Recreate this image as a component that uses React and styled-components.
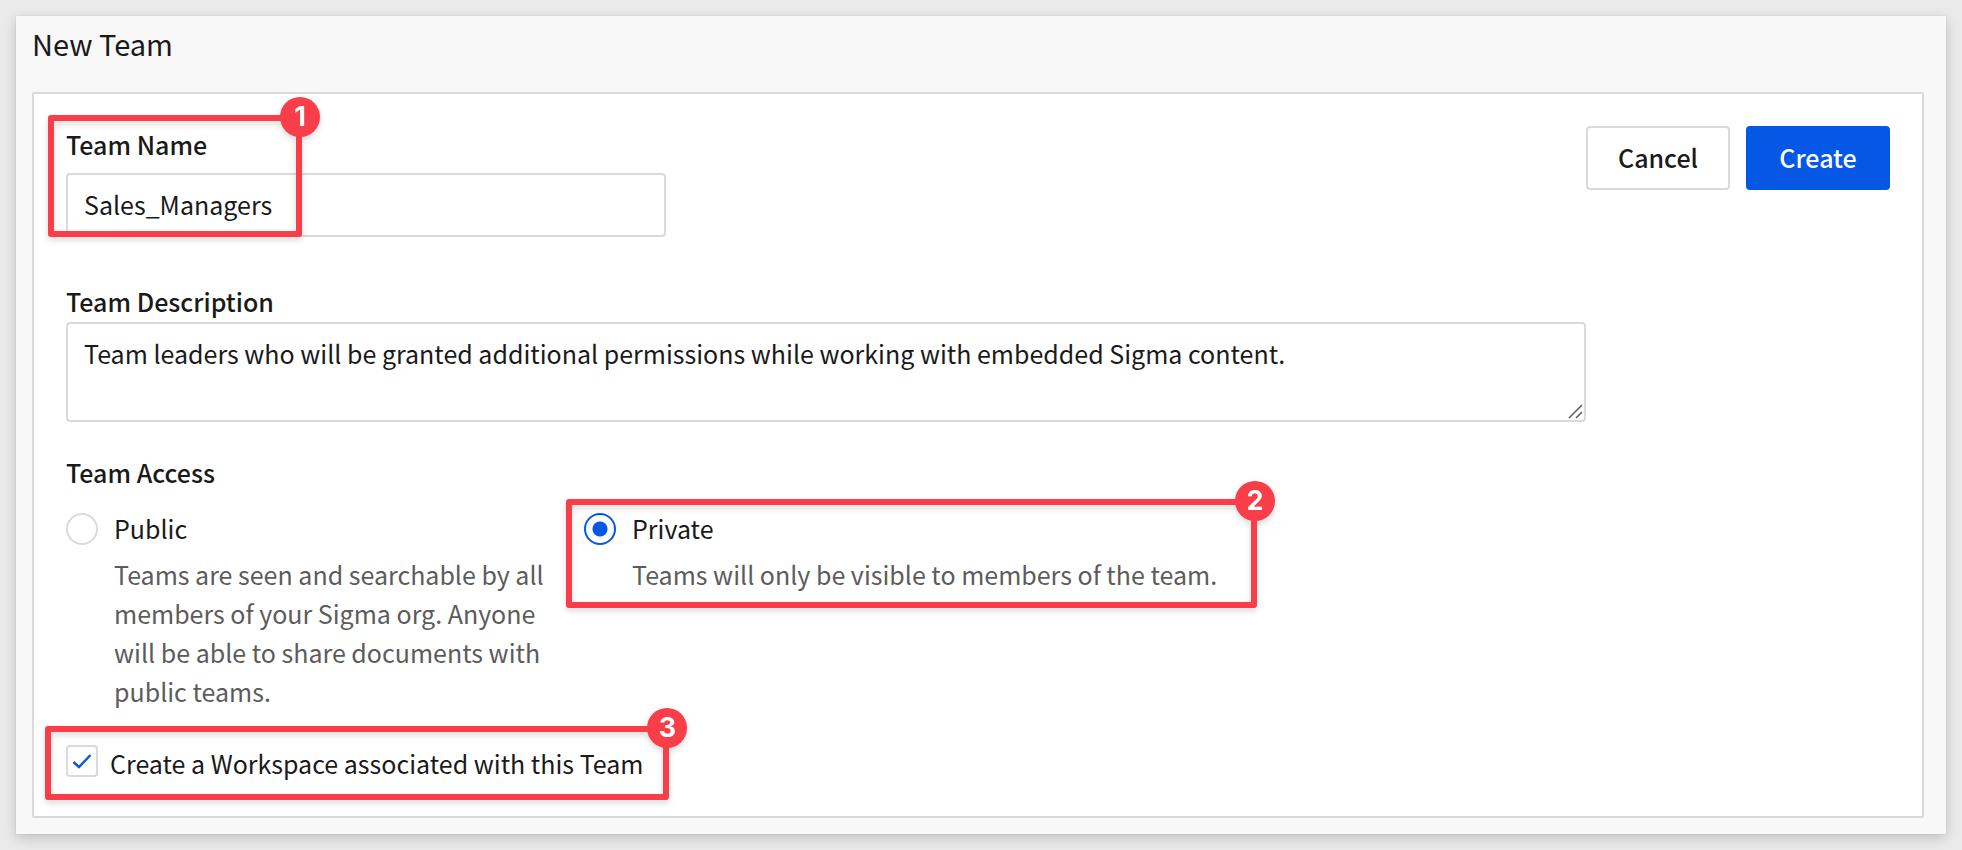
import React, { useState } from "react";
import styled, { createGlobalStyle } from "styled-components";

const colors = {
  page: "#eaeaea",
  panel: "#f8f8f8",
  border: "#dadada",
  text: "#1a1a1a",
  muted: "#5c5c5c",
  blue: "#0558e6",
  red: "#f93e49",
};

const GlobalStyle = createGlobalStyle`
  *, *::before, *::after { box-sizing: border-box; }
  body {
    margin: 0;
    background: ${colors.page};
    color: ${colors.text};
    font-family: "Noto Sans CJK SC", "Open Sans", sans-serif;
    font-size: 25px;
    line-height: 39px;
  }
  button, input, textarea { font: inherit; color: inherit; margin: 0; }
`;

const Page = styled.div`
  padding: 16px;
`;

const Panel = styled.main`
  padding: 8px 22px 16px 16px;
  background: ${colors.panel};
  box-shadow: 0 4px 12px rgba(0, 0, 0, 0.18), 0 0 2px rgba(0, 0, 0, 0.1);
`;

const Title = styled.h1`
  margin: 0 0 30px;
  font-size: 29px;
  font-weight: 400;
  line-height: 38px;
`;

const Card = styled.form`
  padding: 32px 32px 34px;
  background: #fff;
  border: 2px solid ${colors.border};
  border-radius: 2px;
`;

const TopRow = styled.div`
  display: flex;
  justify-content: space-between;
  align-items: flex-start;
  gap: 32px;
`;

const Field = styled.div`
  position: relative;
  display: flex;
  flex-direction: column;
  flex: 0 1 ${(p) => p.$width};
  max-width: ${(p) => p.$width};
  gap: ${(p) => p.$gap};
`;

const Label = styled.label`
  font-weight: 500;
  line-height: 37px;
`;

const TextInput = styled.input`
  width: 100%;
  height: 64px;
  padding: 0 16px 2px;
  background: #fff;
  border: 2px solid ${colors.border};
  border-radius: 4px;
  outline: none;
`;

const TextAreaWrap = styled.div`
  position: relative;
  display: flex;
`;

const TextArea = styled.textarea`
  width: 100%;
  height: 100px;
  padding: 10px 16px;
  background: #fff;
  border: 2px solid ${colors.border};
  border-radius: 4px;
  outline: none;
  overflow: hidden;
  resize: vertical;
  &::-webkit-resizer { display: none; }
`;

const Grip = styled.svg`
  position: absolute;
  right: 3px;
  bottom: 3px;
  width: 15px;
  height: 15px;
  pointer-events: none;
`;

const Actions = styled.div`
  display: flex;
  gap: 16px;
`;

const Button = styled.button`
  width: 144px;
  height: 64px;
  padding: 0 0 2px;
  font-weight: 500;
  color: ${(p) => (p.$primary ? "#fff" : colors.text)};
  background: ${(p) => (p.$primary ? colors.blue : "#fff")};
  border: 2px solid ${(p) => (p.$primary ? colors.blue : colors.border)};
  border-radius: 4px;
  cursor: pointer;
`;

const Section = styled.div`
  margin-top: 46px;
`;

const AccessGroup = styled.fieldset`
  margin: 32px 0 0;
  padding: 0;
  border: 0;
`;

const Legend = styled.legend`
  padding: 0;
  margin-bottom: 22px;
  font-weight: 500;
  line-height: 37px;
`;

const Options = styled.div`
  display: flex;
  align-items: flex-start;
  gap: 32px;
`;

const Option = styled.div`
  position: relative;
  display: grid;
  grid-template-columns: 32px 1fr;
  column-gap: 16px;
  row-gap: 10px;
  max-width: ${(p) => p.$width};
`;

const OptionLabel = styled.label`
  line-height: 30px;
`;

const Hint = styled.p`
  grid-column: 2;
  margin: 0;
  color: ${colors.muted};
`;

const Radio = styled.input`
  appearance: none;
  width: 32px;
  height: 32px;
  background: #fff;
  border: 2px solid ${colors.border};
  border-radius: 50%;
  &:checked {
    border-color: ${colors.blue};
    background: radial-gradient(circle, ${colors.blue} 0 7px, #fff 8px);
  }
`;

const CheckRow = styled.div`
  position: relative;
  display: flex;
  align-items: flex-start;
  gap: 12px;
  width: fit-content;
  margin-top: 34px;
`;

const CheckControl = styled.span`
  position: relative;
  display: flex;
`;

const Checkbox = styled.input`
  appearance: none;
  width: 32px;
  height: 32px;
  background: #fff;
  border: 2px solid ${colors.border};
  border-radius: 4px;
  &:not(:checked) + svg { display: none; }
`;

const CheckLabel = styled.label`
  line-height: 37px;
`;

const Tick = styled.svg`
  position: absolute;
  inset: 0;
  width: 32px;
  height: 32px;
  pointer-events: none;
`;

const Callout = styled.span`
  position: absolute;
  inset: ${(p) => p.$inset};
  width: ${(p) => p.$width};
  border: 6px solid ${colors.red};
  border-radius: 3px;
  filter: drop-shadow(0 3px 3px rgba(0, 0, 0, 0.15));
  pointer-events: none;
`;

const Badge = styled.span`
  position: absolute;
  top: -24px;
  right: -24px;
  width: 40px;
  height: 40px;
  border-radius: 50%;
  background: ${colors.red};
  color: #fff;
  font-family: Inter, "Liberation Sans", sans-serif;
  font-size: 27px;
  font-weight: 700;
  line-height: 40px;
  text-align: center;
`;

function Step({ number, inset, width }) {
  return (
    <Callout $inset={inset} $width={width}>
      <Badge>{number}</Badge>
    </Callout>
  );
}

export default function App() {
  const [access, setAccess] = useState("private");
  return (
    <>
      <GlobalStyle />
      <Page>
        <Panel>
          <Title>New Team</Title>
          <Card onSubmit={(e) => e.preventDefault()}>
            <TopRow>
              <Field $width="600px" $gap="10px">
                <Label htmlFor="team-name">Team Name</Label>
                <TextInput id="team-name" type="text" defaultValue="Sales_Managers" />
                <Step number={1} inset="-11px auto 0 -18px" width="254px" />
              </Field>
              <Actions>
                <Button type="button">Cancel</Button>
                <Button type="submit" $primary>Create</Button>
              </Actions>
            </TopRow>

            <Section>
              <Field $width="1520px" $gap="2px">
                <Label htmlFor="team-description">Team Description</Label>
                <TextAreaWrap>
                  <TextArea
                    id="team-description"
                    defaultValue="Team leaders who will be granted additional permissions while working with embedded Sigma content."
                  />
                  <Grip viewBox="0 0 15 15" fill="none" stroke="#5a5a5a" strokeWidth="1.5" aria-hidden="true">
                    <path d="M1 14 14 1M8 14l6-6" />
                  </Grip>
                </TextAreaWrap>
              </Field>
            </Section>

            <AccessGroup>
              <Legend>Team Access</Legend>
              <Options>
                <Option $width="486px">
                  <Radio
                    id="access-public"
                    type="radio"
                    name="access"
                    checked={access === "public"}
                    onChange={() => setAccess("public")}
                  />
                  <OptionLabel htmlFor="access-public">Public</OptionLabel>
                  <Hint>
                    Teams are seen and searchable by all members of your Sigma org. Anyone will be able
                    to share documents with public teams.
                  </Hint>
                </Option>
                <Option>
                  <Radio
                    id="access-private"
                    type="radio"
                    name="access"
                    checked={access === "private"}
                    onChange={() => setAccess("private")}
                  />
                  <OptionLabel htmlFor="access-private">Private</OptionLabel>
                  <Hint>Teams will only be visible to members of the team.</Hint>
                  <Step number={2} inset="-14px -40px -14px -18px" />
                </Option>
              </Options>
            </AccessGroup>

            <CheckRow>
              <CheckControl>
                <Checkbox id="create-workspace" type="checkbox" defaultChecked />
                <Tick viewBox="0 0 32 32" fill="none" stroke={colors.blue} strokeWidth="2.4" aria-hidden="true">
                  <path d="M7.5 17 13 22 24.5 10" />
                </Tick>
              </CheckControl>
              <CheckLabel htmlFor="create-workspace">Create a Workspace associated with this Team</CheckLabel>
              <Step number={3} inset="-19px -26px -18px -21px" />
            </CheckRow>
          </Card>
        </Panel>
      </Page>
    </>
  );
}
